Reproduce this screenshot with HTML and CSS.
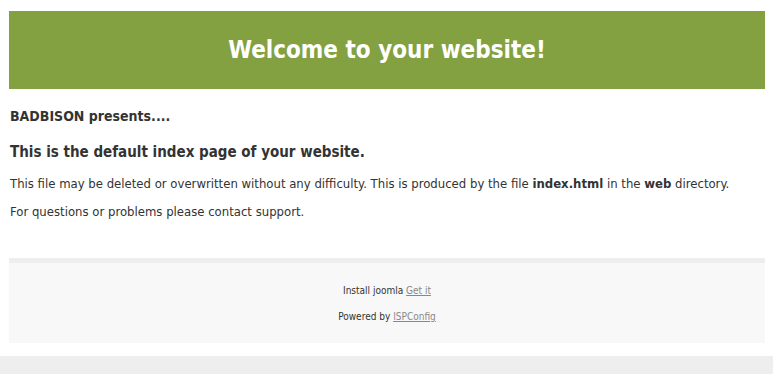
FILE: index.html
```html
<!DOCTYPE html>
<html lang="en-us">
<head>
    <meta charset="UTF-8">
    <meta name="viewport" content="width=device-width, initial-scale=1.0">
    <title>Welcome!</title>
    <link rel="stylesheet" href="styles.css">
</head>
<body>
    <div class="wrapper">
        <div class="header">
            <h1>Welcome to your website!</h1>
        </div>
        <div class="content">
            <h2>BADBISON presents....</h2>
            <h3>This is the default index page of your website.</h3>
            <p>This file may be deleted or overwritten without any difficulty. This is produced by the file <b>index.html</b> in the <b>web</b> directory.</p>
            <p>For questions or problems please contact support.</p>
        </div>
        <div class="footer">
            <p>Install joomla <a href="#">Get it</a></p>
            <p>Powered by <a href="#">ISPConfig</a></p>
        </div>
    </div>
    <div class="bottom"></div>
</body>
</html>
```

FILE: styles.css
```css
* {
    margin: 0;
    padding: 0;
    box-sizing: border-box;
}

body {
    font-family: "DejaVu Sans Condensed", "DejaVu Sans", sans-serif;
    color: #333;
    background: #fff;
}

.wrapper {
    margin: 11px 8px 0 9px;
}

.header {
    background: #84a141;
    height: 78px;
    display: flex;
    align-items: center;
    justify-content: center;
}

.header h1 {
    color: #fff;
    font-size: 24px;
    font-weight: bold;
}

.content {
    padding: 19px 1px 0;
    height: 169px;
}

.content h2 {
    font-size: 14px;
    font-weight: bold;
    margin-bottom: 19px;
}

.content h3 {
    font-size: 15px;
    font-weight: bold;
    margin-bottom: 15px;
}

.content p {
    font-size: 13px;
    margin-bottom: 13px;
}

.footer {
    background: #f8f8f8;
    border-top: 5px solid #eee;
    height: 85px;
    padding-top: 22px;
    text-align: center;
    font-size: 10px;
}

.footer p {
    margin-bottom: 15px;
}

.footer a {
    color: #888;
}

.bottom {
    background: #eee;
    height: 18px;
    margin-top: 13px;
}
```
